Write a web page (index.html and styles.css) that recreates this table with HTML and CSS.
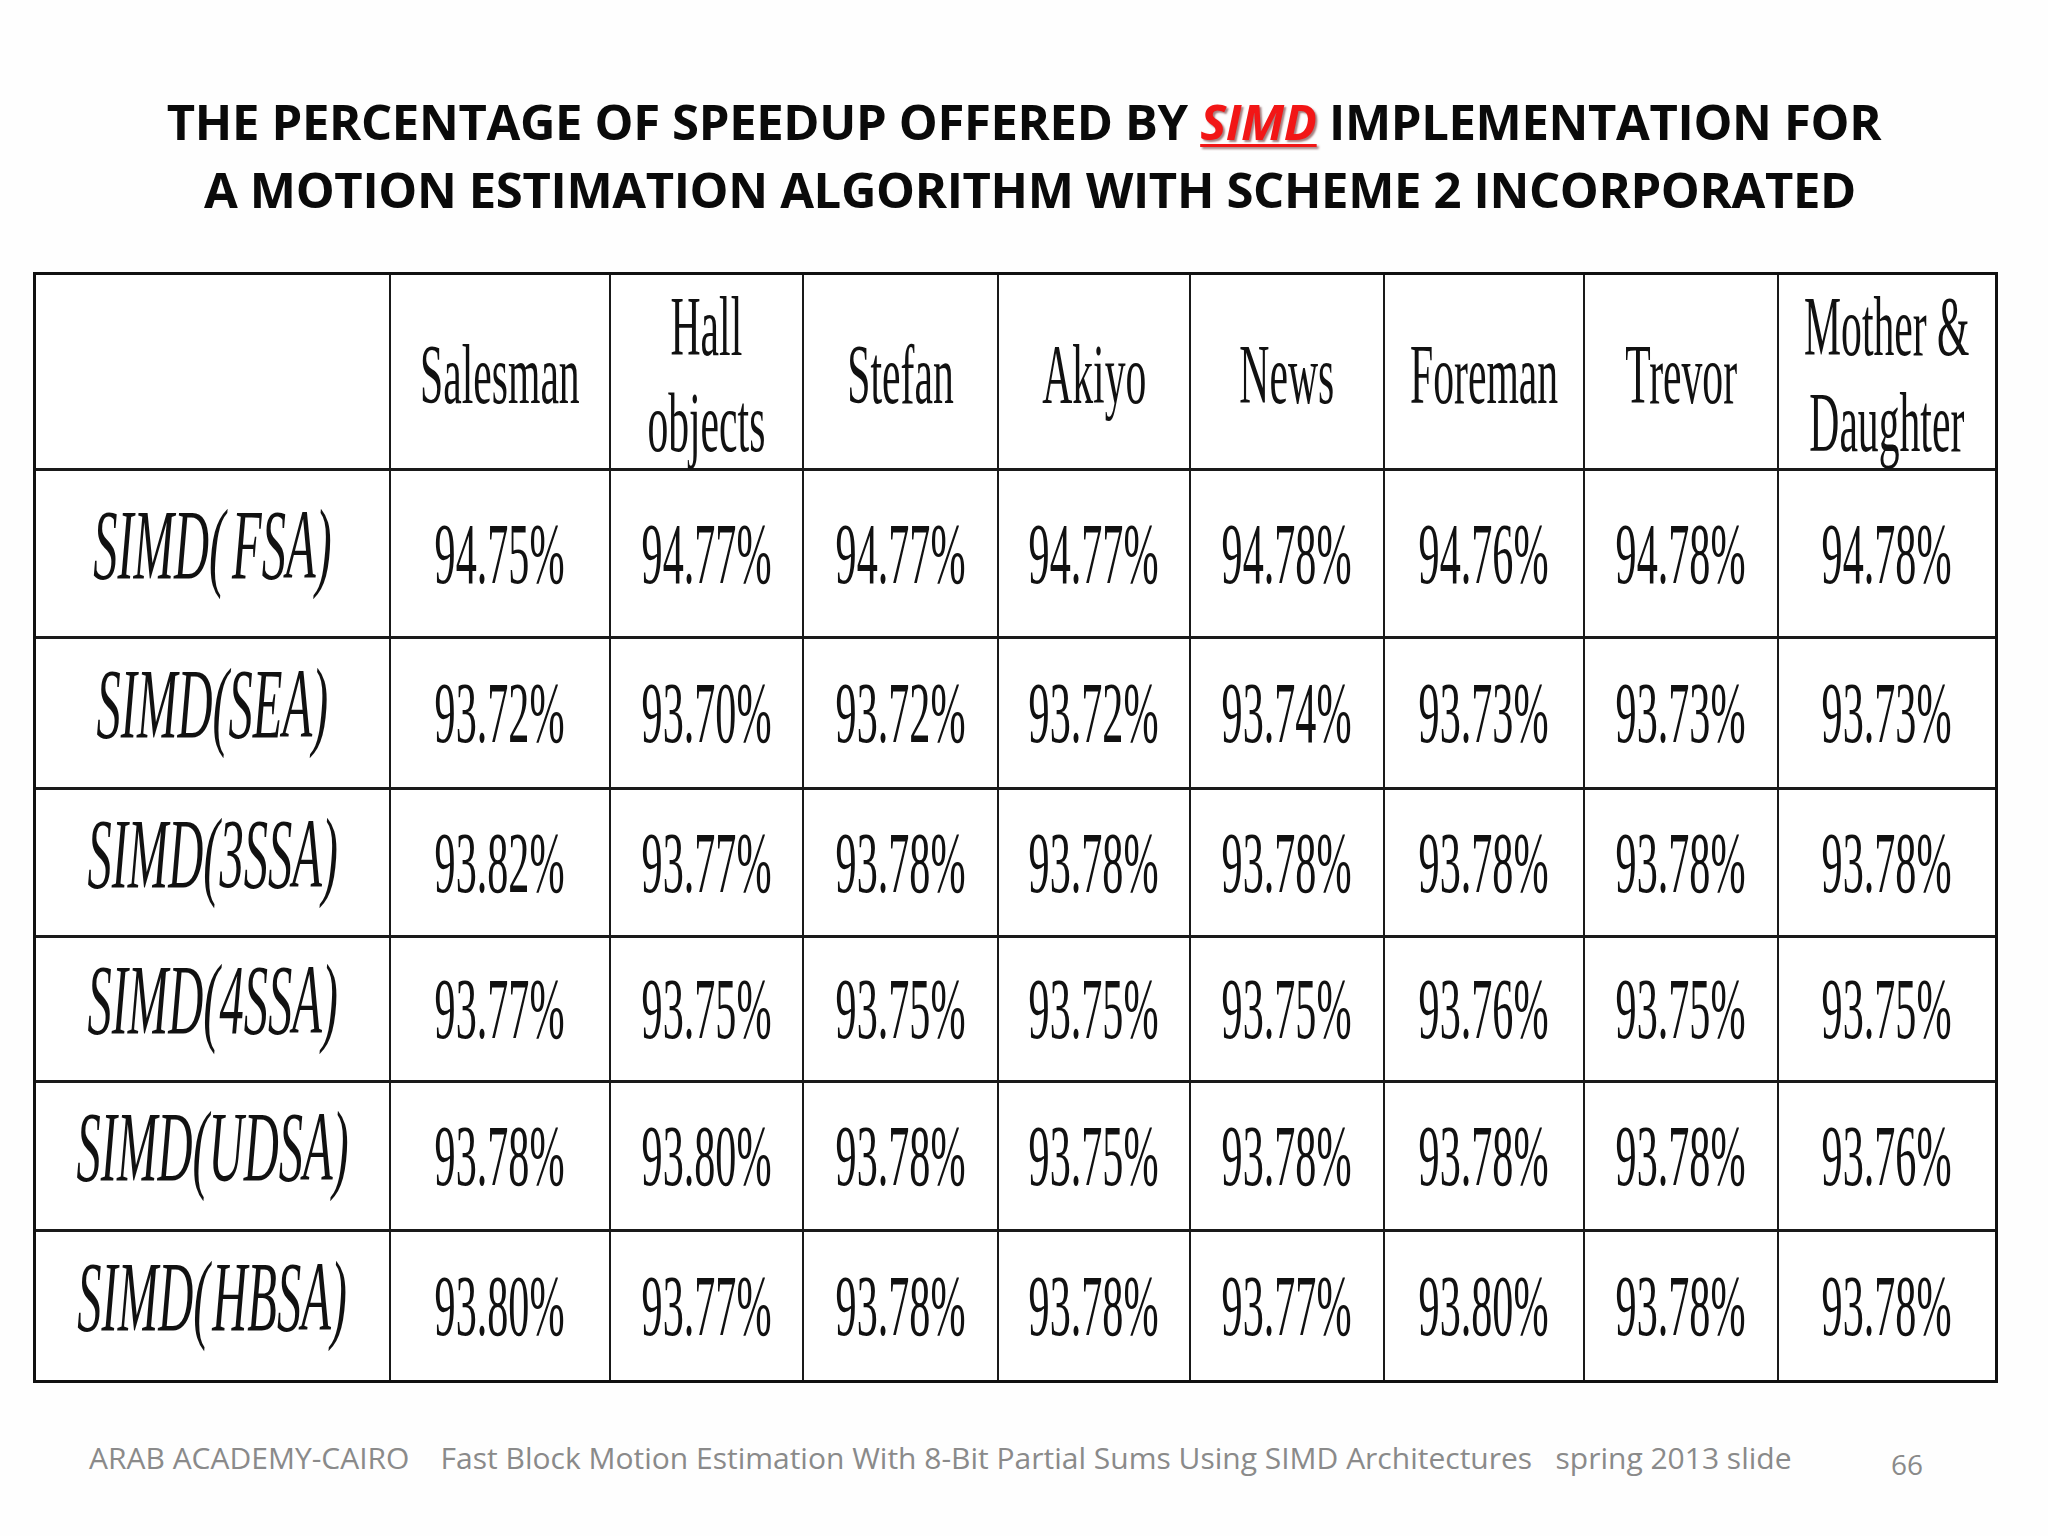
FILE: index.html
```html
<!DOCTYPE html>
<html lang="en">
<head>
<meta charset="utf-8">
<title>SIMD speedup</title>
<link rel="stylesheet" href="styles.css">
</head>
<body>
<div class="slide">
  <h1 class="title">
    <span class="line">THE PERCENTAGE OF SPEEDUP OFFERED BY <em class="hl">SIMD</em> IMPLEMENTATION FOR</span>
    <span class="line line2">A MOTION ESTIMATION ALGORITHM WITH SCHEME 2 INCORPORATED</span>
  </h1>

  <div class="table">
    <div class="cell hd"></div>
    <div class="cell hd"><span class="t">Salesman</span></div>
    <div class="cell hd"><span class="t">Hall<br>objects</span></div>
    <div class="cell hd"><span class="t">Stefan</span></div>
    <div class="cell hd"><span class="t">Akiyo</span></div>
    <div class="cell hd"><span class="t">News</span></div>
    <div class="cell hd"><span class="t">Foreman</span></div>
    <div class="cell hd"><span class="t">Trevor</span></div>
    <div class="cell hd last-col"><span class="t">Mother &amp;<br>Daughter</span></div>

    <div class="cell lbl"><span class="t it">SIMD(<span class="gap">FSA</span>)</span></div>
    <div class="cell"><span class="t">94.75%</span></div>
    <div class="cell"><span class="t">94.77%</span></div>
    <div class="cell"><span class="t">94.77%</span></div>
    <div class="cell"><span class="t">94.77%</span></div>
    <div class="cell"><span class="t">94.78%</span></div>
    <div class="cell"><span class="t">94.76%</span></div>
    <div class="cell"><span class="t">94.78%</span></div>
    <div class="cell last-col"><span class="t">94.78%</span></div>

    <div class="cell lbl"><span class="t it">SIMD(SEA)</span></div>
    <div class="cell"><span class="t">93.72%</span></div>
    <div class="cell"><span class="t">93.70%</span></div>
    <div class="cell"><span class="t">93.72%</span></div>
    <div class="cell"><span class="t">93.72%</span></div>
    <div class="cell"><span class="t">93.74%</span></div>
    <div class="cell"><span class="t">93.73%</span></div>
    <div class="cell"><span class="t">93.73%</span></div>
    <div class="cell last-col"><span class="t">93.73%</span></div>

    <div class="cell lbl"><span class="t it">SIMD(3SSA)</span></div>
    <div class="cell"><span class="t">93.82%</span></div>
    <div class="cell"><span class="t">93.77%</span></div>
    <div class="cell"><span class="t">93.78%</span></div>
    <div class="cell"><span class="t">93.78%</span></div>
    <div class="cell"><span class="t">93.78%</span></div>
    <div class="cell"><span class="t">93.78%</span></div>
    <div class="cell"><span class="t">93.78%</span></div>
    <div class="cell last-col"><span class="t">93.78%</span></div>

    <div class="cell lbl"><span class="t it">SIMD(4SSA)</span></div>
    <div class="cell"><span class="t">93.77%</span></div>
    <div class="cell"><span class="t">93.75%</span></div>
    <div class="cell"><span class="t">93.75%</span></div>
    <div class="cell"><span class="t">93.75%</span></div>
    <div class="cell"><span class="t">93.75%</span></div>
    <div class="cell"><span class="t">93.76%</span></div>
    <div class="cell"><span class="t">93.75%</span></div>
    <div class="cell last-col"><span class="t">93.75%</span></div>

    <div class="cell lbl"><span class="t it">SIMD(UDSA)</span></div>
    <div class="cell"><span class="t">93.78%</span></div>
    <div class="cell"><span class="t">93.80%</span></div>
    <div class="cell"><span class="t">93.78%</span></div>
    <div class="cell"><span class="t">93.75%</span></div>
    <div class="cell"><span class="t">93.78%</span></div>
    <div class="cell"><span class="t">93.78%</span></div>
    <div class="cell"><span class="t">93.78%</span></div>
    <div class="cell last-col"><span class="t">93.76%</span></div>

    <div class="cell lbl last-row"><span class="t it">SIMD(<span class="gap-s">HBSA</span>)</span></div>
    <div class="cell last-row"><span class="t">93.80%</span></div>
    <div class="cell last-row"><span class="t">93.77%</span></div>
    <div class="cell last-row"><span class="t">93.78%</span></div>
    <div class="cell last-row"><span class="t">93.78%</span></div>
    <div class="cell last-row"><span class="t">93.77%</span></div>
    <div class="cell last-row"><span class="t">93.80%</span></div>
    <div class="cell last-row"><span class="t">93.78%</span></div>
    <div class="cell last-row last-col"><span class="t">93.78%</span></div>
  </div>

  <footer class="footer">
    <span class="foot-text">ARAB ACADEMY-CAIRO    Fast Block Motion Estimation With 8-Bit Partial Sums Using SIMD Architectures   spring 2013 slide</span>
    <span class="page-num">66</span>
  </footer>
</div>
</body>
</html>
```

FILE: styles.css
```css
html, body {
  margin: 0;
  padding: 0;
  background: #ffffff;
}

.slide {
  width: 2048px;
  height: 1536px;
  background: #fefefe;
  overflow: hidden;
  display: flex;
  flex-direction: column;
}

.title {
  margin: 87px 0 0 0;
  font-family: "Open Sans", "Noto Sans", sans-serif;
  font-weight: 700;
  font-size: 49px;
  line-height: 68px;
  letter-spacing: -0.35px;
  color: #0a0a0a;
  text-align: center;
  display: flex;
  flex-direction: column;
  align-items: center;
}

.title .line {
  display: block;
  white-space: nowrap;
}

.title .line2 {
  padding-left: 12px;
}

.hl {
  color: #f21616;
  font-style: italic;
  text-decoration: underline;
  text-decoration-thickness: 3px;
  text-underline-offset: 4px;
  text-shadow: 2px 2px 2px rgba(90, 20, 20, 0.55);
}

.table {
  margin: 49px 0 0 33px;
  width: 1965px;
  box-sizing: border-box;
  border: 3px solid #111;
  display: grid;
  grid-template-columns: 355px 220px 193px 195px 192px 194px 200px 194px 216px;
  grid-template-rows: 196px 168px 151px 148px 145px 149px 148px;
  font-family: "Liberation Serif", "Times New Roman", serif;
  color: #111;
  background: #fff;
}

.cell {
  box-sizing: border-box;
  border-right: 2px solid #1a1a1a;
  border-bottom: 3px solid #1a1a1a;
  display: flex;
  align-items: center;
  justify-content: center;
  text-align: center;
  overflow: visible;
}

.cell.last-col {
  border-right: none;
}

.cell.last-row {
  border-bottom: none;
}

.t {
  display: inline-block;
  white-space: nowrap;
  font-size: 86px;
  line-height: 96px;
  transform: scaleX(0.49);
  transform-origin: center center;
}

.hd .t {
  font-size: 85px;
  line-height: 96px;
  padding-top: 4px;
}

.lbl {
  padding-bottom: 18px;
}

.t.it {
  font-style: italic;
  font-size: 99px;
  line-height: 110px;
}

.gap {
  padding-left: 14px;
}

.gap-s {
  padding-left: 6px;
}

.footer {
  margin-top: 55px;
  display: flex;
  align-items: flex-start;
  padding-left: 89px;
  padding-right: 125px;
  font-family: "Open Sans", "Noto Sans", sans-serif;
  font-size: 30px;
  line-height: 40px;
  color: #8a8a8a;
}

.foot-text {
  white-space: pre;
}

.page-num {
  margin-left: auto;
  margin-top: 6px;
  font-size: 28px;
}
```
